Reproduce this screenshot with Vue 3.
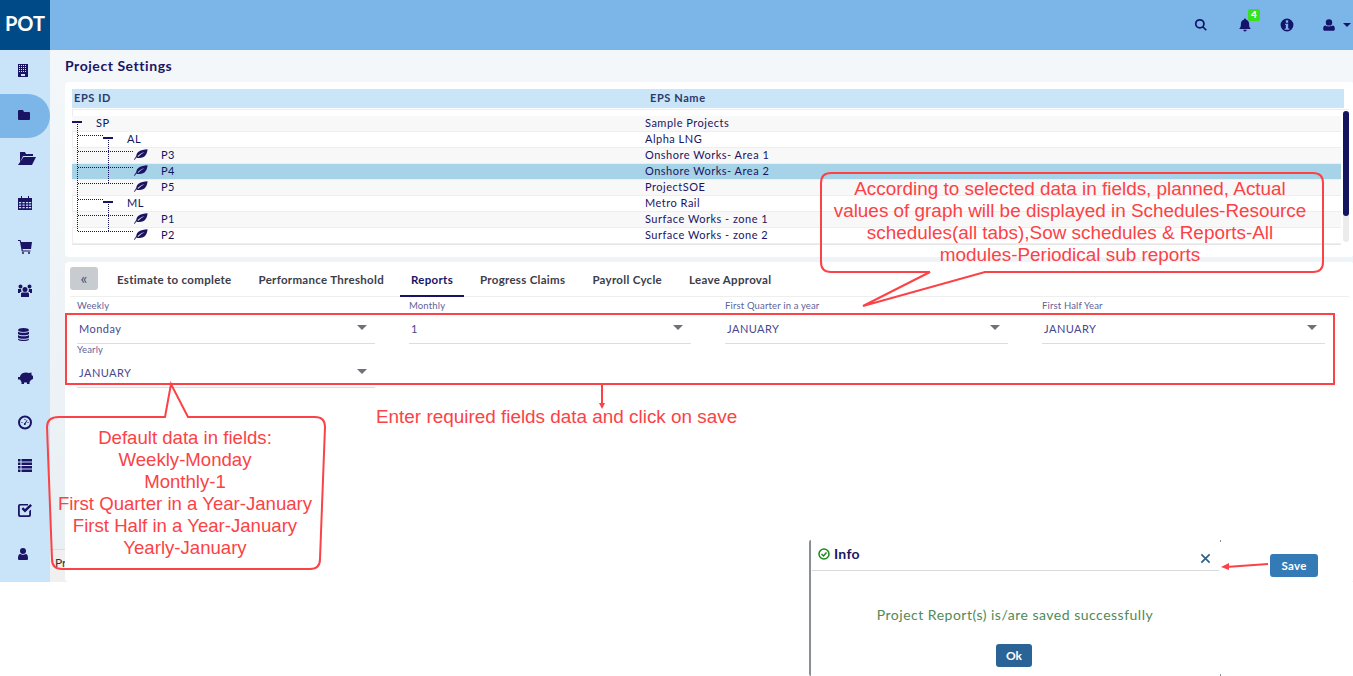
<template>
  <div class="app">
    <header class="topbar">
      <div class="logo">POT</div>
      <div class="top-icons">
        <svg class="top-icon" viewBox="0 0 24 24"><path class="line" d="M10 3a7 7 0 1 0 0 14a7 7 0 0 0 0-14zM15 15l6 6" /></svg>
        <span class="bell">
          <svg class="top-icon" viewBox="0 0 24 24"><path d="M12 1a2 2 0 0 1 2 2c3 1 5 3 5 7c0 5 1 7 3 9H2c2-2 3-4 3-9c0-4 2-6 5-7a2 2 0 0 1 2-2zM9 20h6a3 3 0 0 1-6 0z" /></svg>
          <span class="badge">4</span>
        </span>
        <svg class="top-icon" viewBox="0 0 24 24"><path fill-rule="evenodd" d="M12 1a11 11 0 1 0 0 22a11 11 0 0 0 0-22zM10 4h4v4h-4zM9 10h5v8h2v2H8v-2h2v-6H9z" /></svg>
        <span class="user-menu">
          <svg class="top-icon" viewBox="0 0 24 24"><path d="M12 2a5.500 5.500 0 1 1 0 11a5.500 5.500 0 0 1 0-11zM6 13c2 2 10 2 12 0c3 0 4 3 4 6c0 2-1 3-3 3H5c-2 0-3-1-3-3c0-3 1-6 4-6z" /></svg>
          <i class="caret"></i>
        </span>
      </div>
    </header>

    <div class="shell">
      <nav class="sidebar">
        <div v-for="(icon, i) in navIcons" :key="i" class="nav-item" :class="{ active: i === 1 }">
          <svg :width="icon.w" :height="icon.h" :viewBox="`0 0 ${icon.w} ${icon.h}`" class="nav-icon"><path fill-rule="evenodd" :d="icon.d" /></svg>
        </div>
      </nav>

      <main class="content">
        <div class="peek"><span>Pr</span></div>
        <h1 class="title">Project Settings</h1>

        <section class="panel tree-panel">
          <div class="thead">
            <span class="col-id">EPS ID</span>
            <span class="col-name">EPS Name</span>
          </div>
          <div class="tbody">
            <div class="rows">
              <div v-for="row in rows" :key="row.id" class="row" :class="{ selected: row.id === 'P4' }">
                <span class="cell-id" :class="'lvl' + row.level">
                  <i v-if="row.level < 2" class="minus"></i>
                  <svg v-else class="leaf" viewBox="0 0 16 12"><path fill-rule="evenodd" d="M0 12c1-2 1.500-3 2.500-4C3 3 7 .5 15.500 0C15 5 13 10 6 10C4.500 10 3.500 10 2.500 9.500L1 12zM4 8C6 6 9 4 12 3.500C9 5 7 6.500 5 8.500z" /></svg>
                  {{ row.id }}
                </span>
                <span class="cell-name">{{ row.name }}</span>
              </div>
              <svg class="connectors" width="100" height="130" viewBox="0 0 100 130">
                <path d="M5.500 9V117M5.500 20.500H31M5.500 36.500H62M5.500 52.500H62M5.500 68.500H62M5.500 84.500H31M5.500 100.500H62M5.500 116.500H62M36.500 25V68M36.500 89V116" />
              </svg>
            </div>
            <div class="scroll"><i></i></div>
          </div>
        </section>

        <section class="panel form-panel">
          <div class="tabs">
            <button class="collapse">«</button>
            <span v-for="tab in tabs" :key="tab" class="tab" :class="{ current: tab === 'Reports' }">{{ tab }}</span>
          </div>
          <div class="fields">
            <div v-for="field in fields" :key="field.label" class="field">
              <label>{{ field.label }}</label>
              <div class="select">{{ field.value }}<i class="arrow"></i></div>
            </div>
          </div>
          <div class="actions">
            <button class="save">Save</button>
          </div>
        </section>
      </main>
    </div>

    <svg class="marks" width="1353" height="676" viewBox="0 0 1353 676">
      <rect x="66" y="314" width="1268" height="70" />
      <path d="M831 173H1313Q1323 173 1323 183V262Q1323 272 1313 272H985L863 306L930 272H831Q821 272 821 262V183Q821 173 831 173z" />
      <path d="M59 417H165L171 384L188 417H315Q325 417 325 427L320 559Q320 569 310 569H62Q52 569 52 559L47 427Q47 417 59 417z" />
      <path d="M602 384V406" />
      <path class="head" d="M599 403H605L602 409z" />
    </svg>

    <p class="note note-right">According to selected data in fields, planned, Actual<br>values of graph will be displayed in Schedules-Resource<br>schedules(all tabs),Sow schedules &amp; Reports-All<br>modules-Periodical sub reports</p>
    <p class="note note-left">Default data in fields:<br>Weekly-Monday<br>Monthly-1<br>First Quarter in a Year-January<br>First Half in a Year-January<br>Yearly-January</p>
    <p class="note note-mid">Enter required fields data and click on save</p>

    <div class="dialog">
      <div class="dialog-head">
        <svg class="ok-icon" viewBox="0 0 24 24"><circle cx="12" cy="12" r="10" /><path d="M7 12l4 4l6-7" /></svg>
        <span>Info</span>
        <svg class="close" viewBox="0 0 12 12"><path d="M1.500 1.500L10.500 10.500M10.500 1.500L1.500 10.500" /></svg>
      </div>
      <p class="dialog-msg">Project Report(s) is/are saved successfully</p>
      <button class="ok">Ok</button>
    </div>

    <svg class="marks" width="1353" height="676" viewBox="0 0 1353 676">
      <path d="M1268 564L1226 567" />
      <path class="head" d="M1221 567L1229 563V570z" />
    </svg>
  </div>
</template>

<script setup>
// little square cut-outs for the building and calendar icons
const holes = (xs, ys, w, h) =>
  xs.flatMap(x => ys.map(y => `M${x} ${y}h${w}v${h}h${-w}z`)).join('')

const listRows = [0, 3.5, 7, 10.5]
  .map(y => `M0 ${y}h2.500v2.500H0zM3.500 ${y}H14v2.500H3.500z`)
  .join('')

const navIcons = [
  { w: 10, h: 13, d: 'M0 0H10V13H0z' + holes([1, 3, 5, 7], [1, 3, 5, 7], 1, 1) + 'M3 10H7V12H3z' },
  { w: 12, h: 10, d: 'M0 1Q0 0 1 0H5L6 2H11Q12 2 12 3V9Q12 10 11 10H1Q0 10 0 9z' },
  { w: 18, h: 13, d: 'M2 0H7L8 2H15V4H5L2 10zM5.500 5H18L14 13H0z' },
  { w: 14, h: 14, d: 'M0 2H3V0H4V2H10V0H11V2H14V14H0z' + holes([1, 4.5, 8, 11], [6, 8.5, 11], 2.2, 1.3) },
  { w: 14, h: 14, d: 'M0 0H2.500L3.200 2H14L13 9H4.500L4.800 10.500H12.500V11.500H3.800L1.800 1H0zM5 12a1 1 0 1 1 0 2a1 1 0 0 1 0-2zM11 12a1 1 0 1 1 0 2a1 1 0 0 1 0-2z' },
  { w: 14, h: 13, d: 'M7 3a2.500 2.500 0 1 1 0 5a2.500 2.500 0 0 1 0-5zM2.500 .5a2 2 0 1 1 0 4a2 2 0 0 1 0-4zM11.500 .5a2 2 0 1 1 0 4a2 2 0 0 1 0-4zM0 5H3L3.500 8H2V9H0zM11 5H14V9H12V8H10.500zM4 8.500H10Q11 8.500 11 10V13H3V10Q3 8.500 4 8.500z' },
  { w: 11, h: 13, d: 'M5.500 0C8.500 0 11 .8 11 2C11 3.200 8.500 4 5.500 4C2.500 4 0 3.200 0 2C0 .8 2.500 0 5.500 0zM0 3.500C1 5.200 10 5.200 11 3.500V6C10 7.800 1 7.800 0 6zM0 7C1 8.700 10 8.700 11 7V9.500C10 11.300 1 11.300 0 9.500zM0 10.500C1 12.200 10 12.200 11 10.500V11.500C10 13.500 1 13.500 0 11.500z' },
  { w: 16, h: 12, d: 'M4 1.500C6 .3 9 0 11 1L13.500 .5V3L15 4V7L13 8L11.500 10V12H9V10.500H6V12H3.500V10L2 7.500H0V5H2C2 3.500 3 2.500 4 1.500z' },
  { w: 14, h: 15, d: 'M7 .5A7 7 0 1 0 7 14.500A7 7 0 0 0 7 .5zM7 2.500A5 5 0 1 1 7 12.500A5 5 0 0 1 7 2.500zM3.500 7h1v1h-1zM9.500 7h1v1h-1zM6.500 4h1v1h-1zM8.800 5L9.500 5.500L7.700 8.500A1 1 0 1 1 6.800 8z' },
  { w: 14, h: 13, d: listRows },
  { w: 14, h: 14, d: 'M2 1H10V2.500H2.500Q1.800 2.500 1.800 3.200V11.500Q1.800 12.200 2.500 12.200H10.500Q11.200 12.200 11.200 11.500V8L13 6.500V12Q13 14 11 14H2Q0 14 0 12V3Q0 1 2 1zM12.300 1L14 2.700L7 9.500L3.500 6L5.200 4.300L7 6.100z' },
  { w: 10, h: 12, d: 'M5 0A3 3 0 1 1 5 6A3 3 0 0 1 5 0zM2.500 6C3.500 7 6.500 7 7.500 6C9.500 6 10 8 10 10.500C10 11.500 9.500 12 8.500 12H1.500C.5 12 0 11.500 0 10.500C0 8 .5 6 2.500 6z' }
]

const rows = [
  { id: 'SP', name: 'Sample Projects', level: 0 },
  { id: 'AL', name: 'Alpha LNG', level: 1 },
  { id: 'P3', name: 'Onshore Works- Area 1', level: 2 },
  { id: 'P4', name: 'Onshore Works- Area 2', level: 2 },
  { id: 'P5', name: 'ProjectSOE', level: 2 },
  { id: 'ML', name: 'Metro Rail', level: 1 },
  { id: 'P1', name: 'Surface Works - zone 1', level: 2 },
  { id: 'P2', name: 'Surface Works - zone 2', level: 2 }
]

const tabs = ['Estimate to complete', 'Performance Threshold', 'Reports', 'Progress Claims', 'Payroll Cycle', 'Leave Approval']

const fields = [
  { label: 'Weekly', value: 'Monday' },
  { label: 'Monthly', value: '1' },
  { label: 'First Quarter in a year', value: 'JANUARY' },
  { label: 'First Half Year', value: 'JANUARY' },
  { label: 'Yearly', value: 'JANUARY' }
]
</script>

<style>
body {
  background: #fff;
}
</style>

<style scoped>
.app {
  position: relative;
  width: 1353px;
  height: 676px;
  overflow: hidden;
  font-family: Lato, "Liberation Sans", sans-serif;
  color: #1b1464;
}

.topbar {
  display: flex;
  height: 50px;
  background: #7cb6e8;
}

.logo {
  width: 50px;
  background: #004b87;
  color: #fff;
  font-size: 20px;
  font-weight: 700;
  line-height: 47px;
  text-align: center;
}

.top-icons {
  display: flex;
  align-items: center;
  margin-left: auto;
  gap: 28px;
  padding-right: 2px;
}

.top-icon {
  display: block;
  width: 14px;
  height: 14px;
  fill: #14146b;
}

.top-icon .line {
  fill: none;
  stroke: #14146b;
  stroke-width: 3;
}

.bell {
  position: relative;
  margin-left: 2px;
}

.badge {
  position: absolute;
  top: -9px;
  left: 10px;
  width: 12px;
  height: 12px;
  background: #3adf1f;
  border-radius: 2px;
  color: #fff;
  font-size: 10px;
  font-weight: 900;
  line-height: 11px;
  text-align: center;
}

.user-menu {
  display: flex;
  align-items: center;
  gap: 7px;
}

.caret {
  width: 0;
  height: 0;
  border-left: 4px solid transparent;
  border-right: 4px solid transparent;
  border-top: 4px solid #14146b;
}

.shell {
  display: flex;
  height: 532px;
}

.sidebar {
  width: 50px;
  flex: none;
  background: #c9e4f9;
}

.nav-item {
  display: flex;
  align-items: center;
  height: 43.900px;
  padding: 0 0 2px 18px;
  box-sizing: border-box;
}

.nav-item.active {
  background: #7cb6e8;
  border-radius: 0 22px 22px 0;
}

.nav-icon {
  fill: #1b1464;
}

.content {
  position: relative;
  flex: 1;
  display: flex;
  flex-direction: column;
  padding: 0 2px 0 15px;
  background: linear-gradient(#f3f7fa, #e8eff3);
}

.peek {
  position: absolute;
  left: 0;
  bottom: 0;
  width: 15px;
  height: 33px;
  overflow: hidden;
  background: #f0f0f0;
  border-top: 1px solid #ddd;
  box-sizing: border-box;
  padding: 5px 0 0 5px;
  font-size: 12px;
  color: #333;
}

.title {
  margin: 0;
  height: 32px;
  font-size: 14px;
  font-weight: 700;
  line-height: 32px;
  letter-spacing: 0.55px;
}

.panel {
  position: relative;
  background: #fff;
  border-radius: 4px;
}

.tree-panel {
  height: 175px;
  padding: 7px 5px 0 7px;
  box-sizing: border-box;
}

.thead {
  display: flex;
  width: 1272px;
  height: 19px;
  background: #cae4f8;
  font-size: 11px;
  font-weight: 700;
  line-height: 18px;
  letter-spacing: 0.6px;
  color: #2a3a6a;
}

.col-id {
  width: 576px;
  padding-left: 2px;
}

.tbody {
  display: flex;
  margin-top: 1px;
  border-top: 1px solid #eee;
}

.rows {
  position: relative;
  width: 1268px;
  padding-top: 6px;
  border-bottom: 1px solid #e6e6e6;
  border-left: 1px solid #eee;
}

.row {
  display: flex;
  height: 16px;
  box-sizing: border-box;
  margin-left: -1px;
  border-bottom: 1px solid #eee;
  font-size: 11px;
  line-height: 13px;
  letter-spacing: 0.5px;
  color: #1b1464;
}

.row:nth-child(odd) {
  background: #f8f8f8;
}

.row.selected {
  background: #a6d3e7;
}

.cell-id {
  position: relative;
  flex: none;
  width: 573px;
  box-sizing: border-box;
  color: #14145a;
}

.lvl0 {
  padding-left: 24px;
}

.lvl1 {
  padding-left: 55px;
}

.lvl2 {
  padding-left: 89px;
}

.minus {
  position: absolute;
  top: 5px;
  width: 10px;
  height: 2px;
  background: #1b1464;
}

.lvl0 .minus {
  left: 0;
}

.lvl1 .minus {
  left: 31px;
}

.leaf {
  position: absolute;
  left: 62px;
  top: 1px;
  width: 14px;
  height: 11px;
  fill: #1b1464;
}

.connectors {
  position: absolute;
  left: -1px;
  top: 5px;
}

.connectors path {
  fill: none;
  stroke: #14145a;
  stroke-width: 1;
  stroke-dasharray: 1 1;
  shape-rendering: crispEdges;
}

.scroll {
  flex: none;
  width: 6px;
  height: 131px;
  margin: 1px 0 0 2px;
  background: #ececec;
  border-radius: 3px;
}

.scroll i {
  display: block;
  height: 105px;
  background: #14145f;
  border-radius: 3px;
}

.form-panel {
  display: flex;
  flex-direction: column;
  flex: 1;
  margin-top: 5px;
  padding: 0 5px;
}

.tabs {
  display: flex;
  align-items: stretch;
  gap: 5px;
  height: 34px;
  border-bottom: 1px solid #eee;
  font-size: 11.500px;
  font-weight: 700;
  letter-spacing: 0.3px;
  color: #3c3c4a;
}

.collapse {
  width: 28px;
  height: 23px;
  margin: 5px 3px 0 0;
  padding: 0 0 3px;
  border: 0;
  border-radius: 3px;
  background: #c8cbd0;
  color: #44507a;
  font-size: 16px;
  font-family: inherit;
}

.tab {
  height: 35px;
  box-sizing: border-box;
  padding: 0 11px;
  line-height: 36px;
  white-space: nowrap;
}

.tab.current {
  border-bottom: 2px solid #1b1464;
  color: #1b1464;
}

.fields {
  display: grid;
  grid-template-columns: 298px 282px 283px 283px;
  column-gap: 34px;
  padding: 2px 0 0 7px;
}

.field {
  height: 44px;
}

.field label {
  display: block;
  height: 13px;
  font-size: 9.500px;
  line-height: 13px;
  letter-spacing: 0.15px;
  color: #5f5f9a;
}

.select {
  position: relative;
  height: 32px;
  box-sizing: border-box;
  padding: 9px 0 0 2px;
  border-bottom: 1px solid #ddd;
  font-size: 11px;
  line-height: 16px;
  letter-spacing: 0.45px;
  color: #47478f;
}

.arrow {
  position: absolute;
  right: 8px;
  top: 13px;
  border-left: 5px solid transparent;
  border-right: 5px solid transparent;
  border-top: 5px solid #707078;
}

.actions {
  display: flex;
  justify-content: flex-end;
  margin-top: auto;
  padding: 0 31px 5px 0;
}

.save {
  width: 48px;
  height: 23px;
  padding: 0;
  border: 0;
  border-radius: 3px;
  background: #337ab7;
  color: #fff;
  font-family: inherit;
  font-size: 11.500px;
  font-weight: 700;
  letter-spacing: 0.3px;
}

.marks {
  position: absolute;
  left: 0;
  top: 0;
  pointer-events: none;
}

.marks path,
.marks rect {
  fill: none;
  stroke: #fb4246;
  stroke-width: 2;
}

.marks .head {
  fill: #fb4246;
  stroke: none;
}

.note {
  position: absolute;
  margin: 0;
  font-family: "Liberation Sans", Arial, sans-serif;
  font-size: 18.900px;
  line-height: 22px;
  color: #fb4246;
  text-align: center;
  white-space: nowrap;
}

.note-right {
  left: 819px;
  top: 178px;
  width: 502px;
}

.note-left {
  left: 47px;
  top: 427px;
  width: 276px;
  font-size: 18.600px;
}

.note-mid {
  left: 376px;
  top: 406px;
}

.dialog {
  position: absolute;
  left: 809px;
  top: 540px;
  width: 412px;
  height: 136px;
  box-sizing: border-box;
  padding: 0 2px 0 0;
  background: #fff;
  border-left: 2px solid #8a8f94;
  border-radius: 2px;
  text-align: center;
}

.dialog::before,
.dialog::after {
  content: "";
  position: absolute;
  right: 0;
  width: 1px;
  height: 2px;
  background: #8a8f94;
}

.dialog::before {
  top: 0;
}

.dialog::after {
  bottom: 0;
}

.dialog-head {
  display: flex;
  align-items: flex-start;
  height: 31px;
  margin-left: 1px;
  box-sizing: border-box;
  padding: 5px 8px 0 6px;
  border-bottom: 1px solid #d9d9d9;
  font-size: 14px;
  font-weight: 700;
  letter-spacing: 0.3px;
  color: #1b1464;
  text-align: left;
}

.ok-icon {
  width: 12px;
  height: 12px;
  margin: 3px 4px 0 0;
  fill: none;
  stroke: #1a8a1a;
  stroke-width: 3;
}

.close {
  width: 11px;
  height: 11px;
  margin: 8px 0 0 auto;
  fill: none;
  stroke: #2f5f86;
  stroke-width: 1.800;
}

.dialog-msg {
  margin: 35px 0 0;
  font-size: 14px;
  line-height: 17px;
  letter-spacing: 0.5px;
  color: #4e8a56;
}

.ok {
  width: 36px;
  height: 23px;
  margin-top: 21px;
  margin-left: -2px;
  padding: 0;
  border: 0;
  border-radius: 3px;
  background: #2a6496;
  color: #fff;
  font-family: inherit;
  font-size: 12px;
  font-weight: 700;
}
</style>
